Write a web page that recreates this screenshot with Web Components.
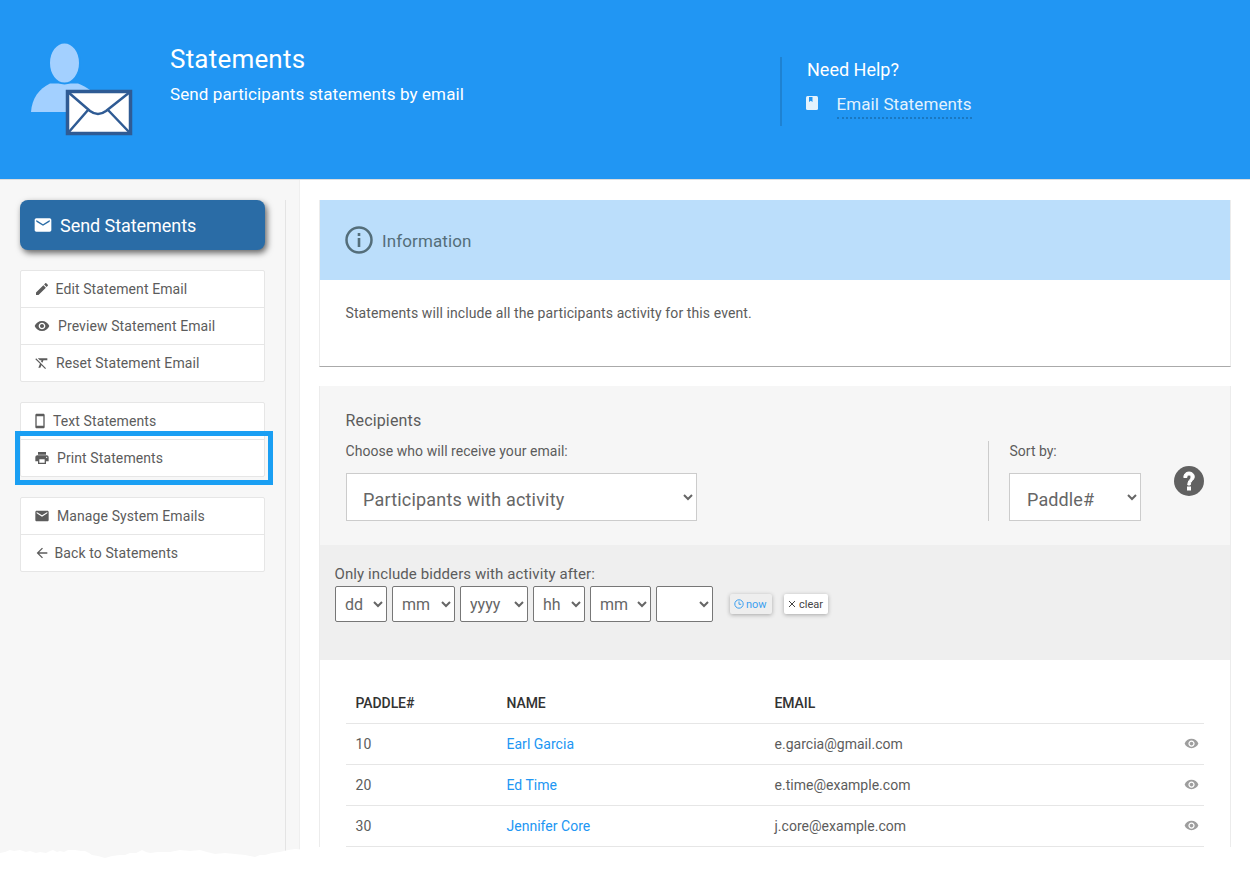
<!DOCTYPE html>
<html lang="en">
<head>
<meta charset="utf-8">
<title>Statements</title>
<style>
  html, body { margin: 0; height: 884px; overflow: hidden; background: #fff; }
  body { font-family: Roboto, "Liberation Sans", sans-serif; color: #555; position: relative; }
  .page { display: flex; height: 680px; overflow: hidden; }
</style>
</head>
<body>
<app-header></app-header>
<div class="page">
  <side-nav>
    <send-button>Send Statements</send-button>
    <menu-group>
      <menu-item icon="edit" gap="12.500">Edit Statement Email</menu-item>
      <menu-item icon="eye" gap="15">Preview Statement Email</menu-item>
      <menu-item icon="clear" gap="13">Reset Statement Email</menu-item>
    </menu-group>
    <menu-group>
      <menu-item icon="phone" gap="12" shift="-2">Text Statements</menu-item>
      <menu-item icon="print" gap="14" highlight>Print Statements</menu-item>
    </menu-group>
    <menu-group>
      <menu-item icon="mail" gap="14">Manage System Emails</menu-item>
      <menu-item icon="back" gap="11.500">Back to Statements</menu-item>
    </menu-group>
  </side-nav>
  <main-area>
    <info-card>Statements will include all the participants activity for this event.</info-card>
    <recipients-card>
      <recipients-panel></recipients-panel>
      <activity-filter></activity-filter>
      <people-table></people-table>
    </recipients-card>
  </main-area>
</div>
<torn-edge></torn-edge>

<script>
const ICONS = {
  edit: 'M3 17.25V21h3.75L17.81 9.94l-3.75-3.75L3 17.25zM20.71 7.04c.39-.39.39-1.02 0-1.41l-2.34-2.34c-.39-.39-1.02-.39-1.41 0l-1.83 1.83 3.75 3.75 1.83-1.83z',
  eye: 'M12 4.5C7 4.5 2.73 7.61 1 12c1.73 4.39 6 7.5 11 7.5s9.27-3.11 11-7.5c-1.73-4.39-6-7.5-11-7.5zM12 17c-2.76 0-5-2.24-5-5s2.24-5 5-5 5 2.24 5 5-2.24 5-5 5zm0-8c-1.66 0-3 1.34-3 3s1.34 3 3 3 3-1.34 3-3-1.34-3-3-3z',
  clear: 'M3.27 5L2 6.27l6.97 6.97L6.5 19h3l1.57-3.66L16.73 21 18 19.73 3.55 5.27 3.27 5zM6 5v.18L8.82 8h2.4l-.72 1.68 2.1 2.1L14.21 8H20V5H6z',
  phone: 'M17 1.01L7 1c-1.1 0-2 .9-2 2v18c0 1.1.9 2 2 2h10c1.1 0 2-.9 2-2V3c0-1.1-.9-1.99-2-1.99zM17 19H7V5h10v14z',
  print: 'M19 8H5c-1.66 0-3 1.34-3 3v6h4v4h12v-4h4v-6c0-1.66-1.34-3-3-3zm-3 11H8v-5h8v5zm3-7c-.55 0-1-.45-1-1s.45-1 1-1 1 .45 1 1-.45 1-1 1zm-1-9H6v4h12V3z',
  mail: 'M20 4H4c-1.1 0-1.99.9-1.99 2L2 18c0 1.1.9 2 2 2h16c1.1 0 2-.9 2-2V6c0-1.1-.9-2-2-2zm0 4l-8 5-8-5V6l8 5 8-5v2z',
  back: 'M20 11H7.83l5.59-5.59L12 4l-8 8 8 8 1.41-1.41L7.83 13H20v-2z'
};
const icon = (name, size) =>
  `<svg width="${size}" height="${size}" viewBox="0 0 24 24" fill="currentColor" aria-hidden="true"><path d="${ICONS[name]}"/></svg>`;

class AppHeader extends HTMLElement {
  constructor() {
    super();
    this.attachShadow({ mode: 'open' });
    this.shadowRoot.innerHTML = `
      <style>
        :host { display: flex; height: 179px; background: #2196f3; border-bottom: 1px solid #ddd; color: #fff; }
        .logo { margin: 42px 0 0 30px; flex: none; }
        .title { margin-left: 36px; padding-top: 43px; flex: none; width: 610px; }
        h1 { margin: 0; font: 400 26px/32px Roboto, sans-serif; letter-spacing: .2px; }
        p { margin: 7px 0 0; font: 400 17px/24px Roboto, sans-serif; letter-spacing: .11px; }
        .help { margin-top: 57px; height: 69px; box-sizing: border-box; padding: 1px 0 0 24px; border-left: 2px solid #1e82d2; }
        .help h2 { margin: 0 0 0 1px; font: 400 18px/24px Roboto, sans-serif; }
        .link { display: flex; align-items: flex-start; margin-top: 10px; color: #e3f2fd; }
        .link svg { margin: 4px 18.500px 0 0; }
        .link a { font-size: 17px; line-height: 24px; padding-bottom: 1px; border-bottom: 2px dotted #1a78c2; letter-spacing: .1px; }
      </style>
      <svg class="logo" width="104" height="94" viewBox="0 0 104 94">
        <path d="M1 70C2 56 9 47 20 41.500L48 41.500C52 43 56 45 60 48V70z" fill="#a3d0ff"/>
        <ellipse cx="34.500" cy="21" rx="15.500" ry="20.500" fill="#a3d0ff" stroke="#2196f3" stroke-width="2"/>
        <rect x="37.500" y="49.500" width="63" height="42" fill="#fff" stroke="#2f5b94" stroke-width="3.500"/>
        <path d="M38 50L60 69Q68 75 76 69L100 50M38 91L58 68M100 91L78 68" fill="none" stroke="#2f5b94" stroke-width="2.500"/>
      </svg>
      <div class="title">
        <h1>Statements</h1>
        <p>Send participants statements by email</p>
      </div>
      <div class="help">
        <h2>Need Help?</h2>
        <div class="link">
          <svg width="12" height="14" viewBox="0 0 12 14"><path d="M1.500 0H10.500Q12 0 12 1.500V12.500Q12 14 10.500 14H1.500Q0 14 0 12.500V1.500Q0 0 1.500 0z" fill="#e3f2fd"/><path d="M3 1H6.500V6L4.750 4.800 3 6z" fill="#2196f3"/></svg>
          <a>Email Statements</a>
        </div>
      </div>`;
  }
}

class SideNav extends HTMLElement {
  constructor() {
    super();
    this.attachShadow({ mode: 'open' });
    this.shadowRoot.innerHTML = `
      <style>
        :host { display: block; flex: none; width: 299px; background: #f7f7f7; border-right: 1px solid #efefef; padding-top: 20px; }
        .inner { width: 245px; height: 100%; padding: 0 20px; border-right: 1px solid #e4e4e4; display: flex; flex-direction: column; gap: 20px; }
      </style>
      <div class="inner"><slot></slot></div>`;
  }
}

class SendButton extends HTMLElement {
  constructor() {
    super();
    this.attachShadow({ mode: 'open' });
    this.shadowRoot.innerHTML = `
      <style>
        :host { display: flex; align-items: center; height: 50px; padding-left: 12.500px; box-sizing: border-box; background: #2a6ca6; border-radius: 8px; color: #fff; font-size: 18px; letter-spacing: -.05px; box-shadow: 2px 3px 6px rgba(0,0,0,.6); }
        svg { margin-right: 7.500px; }
      </style>
      ${icon('mail', 20)}<slot></slot>`;
  }
}

class MenuGroup extends HTMLElement {
  constructor() {
    super();
    this.attachShadow({ mode: 'open' });
    this.shadowRoot.innerHTML = `
      <style>
        :host { display: block; background: #fff; border: 1px solid #e6e6e6; border-radius: 2px; }
        ::slotted(menu-item:not(:last-child)) { border-bottom: 1px solid #e6e6e6; }
      </style>
      <slot></slot>`;
  }
}

class MenuItem extends HTMLElement {
  constructor() {
    super();
    this.attachShadow({ mode: 'open' });
    const gap = this.getAttribute('gap') || 12;
    const shift = this.getAttribute('shift') || 0;
    const name = this.getAttribute('icon');
    this.shadowRoot.innerHTML = `
      <style>
        :host { display: flex; align-items: center; height: 36px; padding-left: 13px; position: relative; font-size: 14px; color: #5c5c5c; letter-spacing: .1px; }
        svg { margin: 0 ${gap - 7}px 0 ${shift}px; flex: none; }
        :host([highlight])::after { content: ""; position: absolute; left: -6px; right: -9px; top: -9px; bottom: -9px; border: 5px solid #1a9ff3; pointer-events: none; }
      </style>
      ${icon(name, 16)}<slot></slot>`;
  }
}

class MainArea extends HTMLElement {
  constructor() {
    super();
    this.attachShadow({ mode: 'open' });
    this.shadowRoot.innerHTML = `
      <style>
        :host { display: flex; flex-direction: column; gap: 19px; flex: none; width: 910px; margin-left: 20px; padding-top: 20px; }
      </style>
      <slot></slot>`;
  }
}

class InfoCard extends HTMLElement {
  constructor() {
    super();
    this.attachShadow({ mode: 'open' });
    this.shadowRoot.innerHTML = `
      <style>
        :host { display: block; flex: none; border: 1px solid #ececec; border-bottom: 1px solid #aaa; border-top: 0; margin: 0 -1px 0 -1px; }
        .head { display: flex; align-items: center; gap: 9.500px; height: 80px; padding-left: 24.500px; background: #bbdefb; color: #546e7a; font-size: 17px; letter-spacing: .12px; }
        .head span { padding-top: 2px; }
        .body { height: 86px; padding: 25px 25.500px 0; box-sizing: border-box; font-size: 14px; line-height: 16px; color: #5c5c5c; letter-spacing: .1px; }
      </style>
      <div class="head">
        <svg width="28" height="28" viewBox="0 0 28 28"><circle cx="14" cy="14" r="12.500" fill="none" stroke="#546e7a" stroke-width="2.500"/><rect x="12.700" y="7" width="2.600" height="3" fill="#546e7a"/><rect x="12.700" y="12" width="2.600" height="9" fill="#546e7a"/></svg>
        <span>Information</span>
      </div>
      <div class="body"><slot></slot></div>`;
  }
}

class RecipientsCard extends HTMLElement {
  constructor() {
    super();
    this.attachShadow({ mode: 'open' });
    this.shadowRoot.innerHTML = `
      <style>
        :host { display: block; flex: none; border-left: 1px solid #ececec; border-right: 1px solid #ececec; margin: 0 -1px; }
      </style>
      <slot></slot>`;
  }
}

class RecipientsPanel extends HTMLElement {
  constructor() {
    super();
    this.attachShadow({ mode: 'open' });
    this.shadowRoot.innerHTML = `
      <style>
        :host { display: flex; height: 159px; box-sizing: border-box; background: #f6f6f6; padding: 25px 0 0 26px; font-size: 14px; color: #5c5c5c; }
        .who { width: 642px; flex: none; }
        h3 { margin: 0 0 0 -.5px; font: 400 16px/20px Roboto, sans-serif; letter-spacing: .15px; }
        label { display: block; line-height: 16px; margin: 12px 0 0 -.5px; letter-spacing: .05px; }
        select { display: block; height: 48px; margin-top: 14px; padding: 4px 12px 0; background: #fff; border: 1px solid #ccc; border-radius: 0; color: #666; font: 400 18px Roboto, sans-serif; letter-spacing: .2px; box-sizing: border-box; }
        .who select { width: 351px; }
        .sort { margin-top: 30px; height: 80px; padding-left: 20px; border-left: 1px solid #ccc; flex: none; width: 140px; }
        .sort label { margin: 2px 0 0 .5px; letter-spacing: 0; }
        .sort select { width: 132px; margin-top: 14px; padding-left: 13px; letter-spacing: .12px; }
        svg { margin: 55px 0 0 24.500px; flex: none; }
      </style>
      <div class="who">
        <h3>Recipients</h3>
        <label>Choose who will receive your email:</label>
        <select><option>Participants with activity</option></select>
      </div>
      <div class="sort">
        <label>Sort by:</label>
        <select><option>Paddle#</option></select>
      </div>
      <svg width="30" height="30" viewBox="0 0 30 30"><circle cx="15" cy="15" r="15" fill="#616161"/><path d="M9.800 11.500C9.800 8 12 6 15 6C18 6 20.300 8 20.300 10.800C20.300 14.400 16.200 14.700 16.200 19H13.800C13.800 14 17 13.800 17 11C17 9.800 16.200 9 15 9C13.700 9 12.900 10 12.900 11.500z" fill="#fff" stroke="#fff" stroke-width="1"/><rect x="13" y="20.500" width="4" height="4" fill="#fff"/></svg>`;
  }
}

class ActivityFilter extends HTMLElement {
  constructor() {
    super();
    this.attachShadow({ mode: 'open' });
    const parts = [['dd', 52], ['mm', 63], ['yyyy', 68], ['hh', 52], ['mm', 61], ['', 57]];
    this.shadowRoot.innerHTML = `
      <style>
        :host { display: block; height: 115px; box-sizing: border-box; background: #efefef; padding: 21px 0 0 15px; font-size: 15px; color: #5c5c5c; }
        label { display: block; line-height: 16px; margin-left: -.5px; letter-spacing: .1px; }
        .row { display: flex; gap: 5px; align-items: center; margin-top: 4px; }
        select { height: 36px; background: #fff; border: 1px solid #777; border-radius: 2px; padding: 0 5px; color: #666; font: 400 16px Roboto, sans-serif; box-sizing: border-box; }
        .now, .clear { display: flex; align-items: center; height: 20px; box-sizing: border-box; border-radius: 2px; font-size: 11px; box-shadow: 0 1px 4px rgba(0,0,0,.3); }
        .now { margin-left: 12px; width: 42px; padding-left: 4px; gap: 2px; background: #eee; color: #3b9ff0; }
        .clear { margin-left: 7px; width: 44px; padding-left: 4px; gap: 3px; background: #fff; color: #444; }
      </style>
      <label>Only include bidders with activity after:</label>
      <div class="row">
        ${parts.map(([t, w]) => `<select style="width:${w}px"><option>${t}</option></select>`).join('')}
        <span class="now"><svg width="10" height="10" viewBox="0 0 10 10" fill="none" stroke="currentColor"><circle cx="5" cy="5" r="4.200"/><path d="M5 2.500V5.300H7.200"/></svg>now</span>
        <span class="clear"><svg width="8" height="8" viewBox="0 0 8 8" fill="none" stroke="currentColor"><path d="M1 1L7 7M7 1L1 7"/></svg>clear</span>
      </div>`;
  }
}

class PeopleTable extends HTMLElement {
  constructor() {
    super();
    this.attachShadow({ mode: 'open' });
    const rows = [
      ['10', 'Earl Garcia', 'e.garcia@gmail.com'],
      ['20', 'Ed Time', 'e.time@example.com'],
      ['30', 'Jennifer Core', 'j.core@example.com']
    ];
    this.shadowRoot.innerHTML = `
      <style>
        :host { display: block; background: #fff; padding: 23px 26px 0; font-size: 14px; color: #5c5c5c; }
        .row { display: grid; grid-template-columns: 151px 268px 1fr 20px; align-items: center; height: 40px; padding-left: 9.500px; border-bottom: 1px solid #e6e6e6; letter-spacing: .02px; }
        .head { font-weight: 500; color: #333; letter-spacing: -.08px; }
        .name { color: #2196f3; }
        svg { color: #9e9e9e; margin-top: -2px; }
      </style>
      <div class="row head"><span>PADDLE#</span><span>NAME</span><span>EMAIL</span><span></span></div>
      ${rows.map(([p, n, e]) => `<div class="row"><span>${p}</span><span class="name">${n}</span><span>${e}</span>${icon('eye', 15)}</div>`).join('')}`;
  }
}

class TornEdge extends HTMLElement {
  constructor() {
    super();
    this.attachShadow({ mode: 'open' });
    this.shadowRoot.innerHTML = `
      <style>
        :host { display: block; position: absolute; left: 0; top: 845px; width: 1250px; height: 20px; }
        svg { display: block; }
      </style>
      <svg width="1250" height="20" viewBox="0 0 1250 20"><path d="M0 8L5 7 10 5 14 6 20 5 26 7 30 6 36 8 40 7 46 8 50 6 53 5 57 7 60 6 64 7 68 5 75 5 81 6 85 6 89 8 92 10 98 11 105 13 112 11 120 10 125 10 130 8 136 8 142 5 146 7 150 8 158 7 170 7 175 6 180 5 190 6 200 5 207 7 215 9 225 8 235 9 245 10 255 12 260 10 265 10 272 8 280 7 288 5 295 4 310 5H1250V20H0z" fill="#fff"/></svg>`;
  }
}

customElements.define('app-header', AppHeader);
customElements.define('side-nav', SideNav);
customElements.define('send-button', SendButton);
customElements.define('menu-group', MenuGroup);
customElements.define('menu-item', MenuItem);
customElements.define('main-area', MainArea);
customElements.define('info-card', InfoCard);
customElements.define('recipients-card', RecipientsCard);
customElements.define('recipients-panel', RecipientsPanel);
customElements.define('activity-filter', ActivityFilter);
customElements.define('people-table', PeopleTable);
customElements.define('torn-edge', TornEdge);
</script>
</body>
</html>
